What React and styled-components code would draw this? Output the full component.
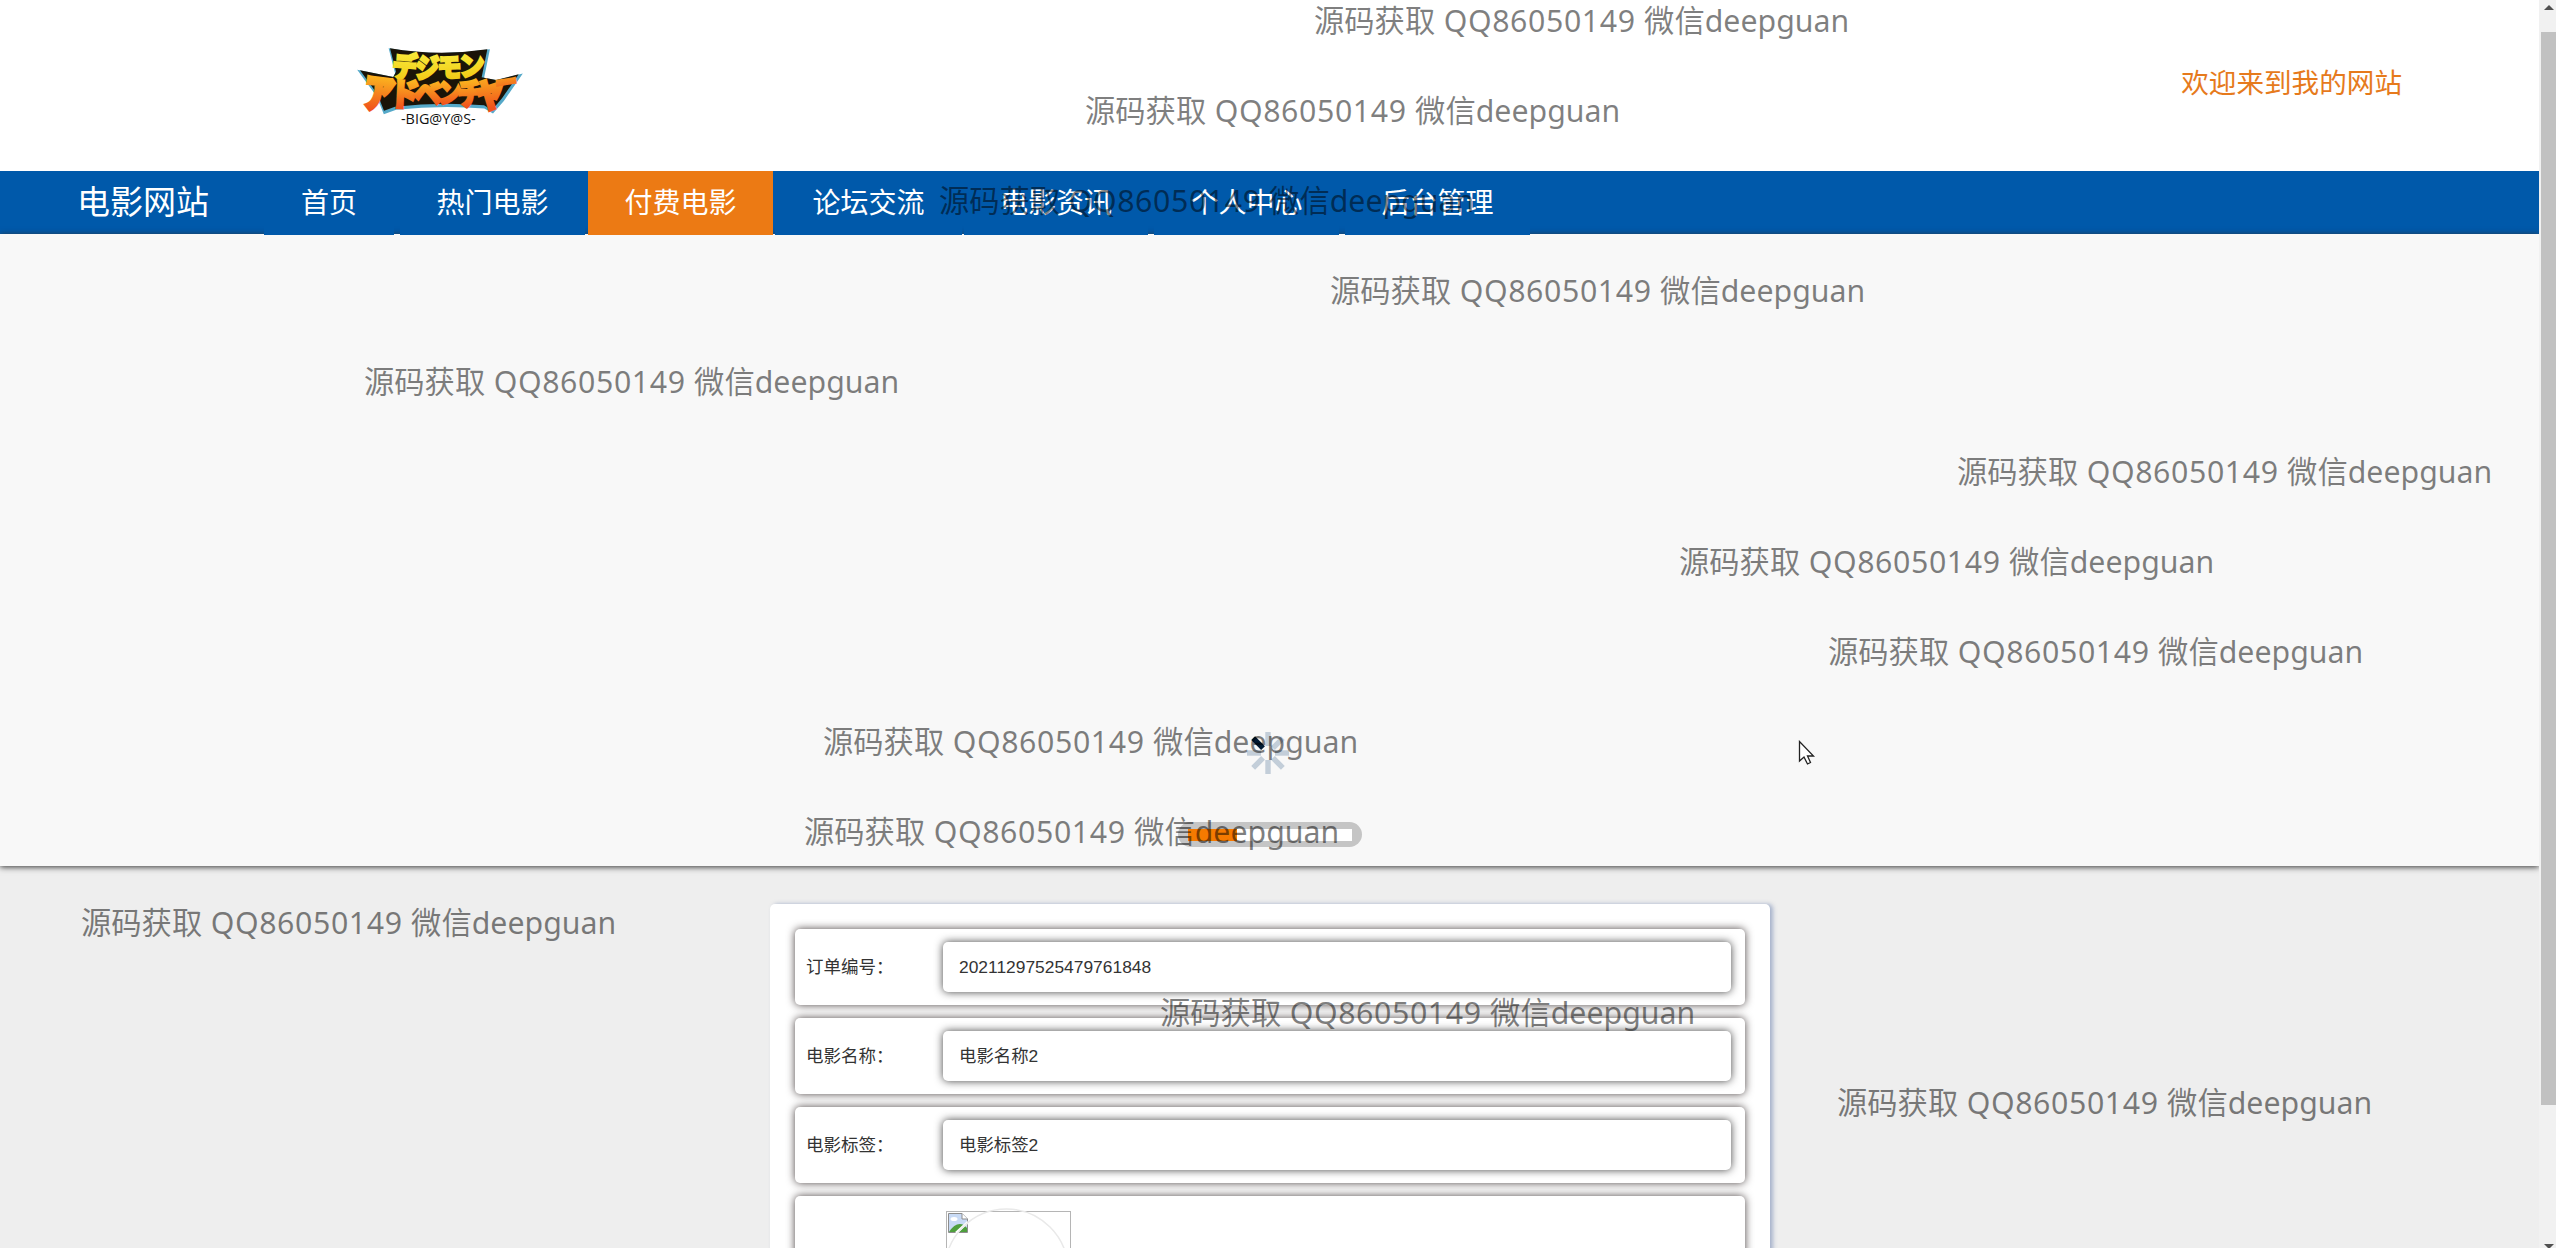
import React from "react";
import styled, { createGlobalStyle } from "styled-components";

const Global = createGlobalStyle`
  * { box-sizing: border-box; }
  html, body { margin: 0; height: 1248px; overflow: hidden; }
  body { background: #eee; font-family: "Liberation Sans", "Noto Sans CJK SC", sans-serif; color: #333; }
`;

const Screen = styled.div`
  position: relative;
  display: flex;
  width: 2556px;
  height: 1248px;
  overflow: hidden;
`;
const Page = styled.main`
  width: 2539px;
  height: 1248px;
  overflow: hidden;
  display: flex;
  flex-direction: column;
  background: #eee;
`;
const Header = styled.header`
  flex: none;
  height: 171px;
  background: #fff;
  display: flex;
  justify-content: space-between;
  align-items: flex-start;
  padding: 30px 137px 0 340px;
`;
const Welcome = styled.div`
  margin-top: 34px;
  font-size: 27.6px;
  line-height: 40px;
  color: #e67a1c;
  white-space: nowrap;
`;
const Nav = styled.nav`
  flex: none;
  height: 63px;
  background: #0059aa;
  display: flex;
  align-items: flex-start;
  padding-left: 77px;
  color: #fff;
  white-space: nowrap;
`;
const Brand = styled.div`
  width: 187px;
  font-size: 33px;
  line-height: 63px;
`;
const NavItem = styled.a`
  position: relative;
  z-index: 1;
  height: 64px;
  width: ${(p) => p.$width || 185}px;
  margin-right: ${(p) => p.$gap}px;
  background: ${(p) => (p.$active ? "#ec7a14" : "#0059aa")};
  font-size: 28px;
  line-height: 65px;
  text-align: center;
`;
const Hero = styled.section`
  position: relative;
  flex: none;
  height: 632px;
  background: #f8f8f8;
  box-shadow: 0 1px 6px #333;
  display: flex;
  flex-direction: column;
  align-items: center;
  justify-content: flex-end;
  gap: 47px;
  padding-bottom: 19px;
`;
const Progress = styled.div`
  width: 184px;
  height: 25px;
  margin-left: 1px;
  padding: 7px 10px 6px;
  border-radius: 13px;
  background: #c5c5c5;
  display: flex;
`;
const Track = styled.div`
  flex: 1;
  background: #fff;
`;
const Fill = styled.div`
  height: 100%;
  background: #f57a00;
`;
const Card = styled.section`
  flex: none;
  width: 1000px;
  height: 420px;
  margin: 38px 0 0 770px;
  padding: 25px;
  border-radius: 5px;
  background: #fff;
  box-shadow: 3px 0 4px rgba(95, 120, 170, 0.5);
  display: flex;
  flex-direction: column;
  gap: 13px;
`;
const Row = styled.div`
  flex: none;
  height: ${(p) => p.$height || 76}px;
  padding: 0 14px 0 11px;
  border-radius: 5px;
  background: #fff;
  box-shadow: 0 0 8px #4c4444;
  display: flex;
  align-items: ${(p) => (p.$height ? "flex-start" : "center")};
  font-size: 17.5px;
`;
const Label = styled.label`
  width: 137px;
  margin-top: -4px;
  white-space: nowrap;
`;
const Value = styled.div`
  width: 788px;
  height: 50px;
  padding: 0 16px;
  border-radius: 5px;
  background: #fff;
  box-shadow: 0 0 8px #444;
  line-height: 50px;
  font-size: 17.4px;
`;
const Scrollbar = styled.aside`
  width: 17px;
  height: 1248px;
  padding-left: 2px;
  background: #f1f1f1;
  display: flex;
  flex-direction: column;
  align-items: center;
  justify-content: space-between;
`;
const Thumb = styled.div`
  width: 15px;
  height: 1073px;
  margin: 22px 0 auto;
  background: #c1c1c1;
`;
const Arrow = styled.svg`
  flex: none;
  display: block;
  width: 10px;
  height: 5px;
  margin-top: ${(p) => (p.$up ? 5 : 0)}px;
  margin-bottom: ${(p) => (p.$up ? 0 : -1)}px;
`;
const Watermarks = styled.div`
  position: absolute;
  inset: 0;
  z-index: 5;
  pointer-events: none;
  color: rgba(0, 0, 0, 0.5);
  font-family: "Noto Sans", "Noto Sans CJK SC", sans-serif;
  font-size: 30.3px;
  line-height: 44px;
  white-space: pre;
`;
const Mark = styled.div`
  position: absolute;
  left: ${(p) => p.$x}px;
  top: ${(p) => p.$y}px;
  display: flex;
`;
const Latin = styled.span`
  letter-spacing: ${(p) => p.$spacing}px;
`;
const Cursor = styled.svg`
  position: absolute;
  left: 1798px;
  top: 740px;
  z-index: 6;
`;
const Picture = styled.svg`
  display: block;
  margin-left: 138px;
  margin-top: 9px;
`;
const Loader = styled.svg`
  display: block;
  margin-right: 3px;
`;

const logoTop = [
  ["デ", 163, 68, 68, 76, 4], ["ジ", 230, 74, 66, 72, 2],
  ["モ", 294, 75, 66, 70, -2], ["ン", 358, 72, 70, 70, -5],
];
const logoBottom = [
  ["ア", 80, 131, 86, 104, 7], ["ド", 156, 146, 80, 84, 3], ["ベ", 224, 150, 78, 74, 1],
  ["ン", 296, 150, 66, 72, 0], ["チ", 354, 149, 70, 82, -3], ["ャ", 400, 132, 88, 104, -5],
  ["ー", 462, 126, 62, 66, -9],
];

function LogoChar({ c, fill }) {
  const [ch, x, y, w, h, r] = c;
  return (
    <text
      transform={`translate(${x} ${y}) rotate(${r}) scale(${w / 92} ${h / 88})`}
      x="-4" y="84" fontSize="100" fontWeight="900"
      fontFamily="Noto Sans CJK JP, sans-serif"
      fill={fill} stroke={fill} strokeWidth="9"
    >{ch}</text>
  );
}

function Logo() {
  const shape = "M150 55Q295 80 442 58L425 142L468 150L536 133L486 205L456 240L432 226Q300 215 165 230L132 242L112 192L60 121L160 141L168 125Z";
  return (
    <svg width="200" height="110" viewBox="0 0 600 330">
      <defs>
        <linearGradient id="gold" gradientUnits="userSpaceOnUse" x1="0" y1="0" x2="0" y2="90">
          <stop offset="0" stopColor="#f8e838" /><stop offset="1" stopColor="#f2cc18" />
        </linearGradient>
        <linearGradient id="fire" gradientUnits="userSpaceOnUse" x1="0" y1="5" x2="0" y2="90">
          <stop offset="0" stopColor="#fbb21f" /><stop offset="1" stopColor="#f0521c" />
        </linearGradient>
      </defs>
      <path d={shape} fill="#55a9c9" stroke="#55a9c9" strokeWidth="9" transform="translate(2 5)" />
      <path d={shape} fill="#1a1408" />
      {logoTop.map((c) => <LogoChar key={c[0]} c={c} fill="url(#gold)" />)}
      {logoBottom.map((c) => <LogoChar key={c[0]} c={c} fill="url(#fire)" />)}
      <text x="183" y="281" fontFamily="Open Sans, sans-serif" fontSize="46" fill="#111" textLength="224" lengthAdjust="spacingAndGlyphs">-BIG@Y@S-</text>
    </svg>
  );
}

function Spinner() {
  return (
    <Loader width="44" height="44" viewBox="-22 -22 44 44">
      {[0, 45, 90, 135, 180, 225, 270, 315].map((a) => (
        <rect key={a} x="-2.7" y="-21" width="5.4" height="14" fill={a === 315 ? "#001a33" : "#c3ced9"} transform={`rotate(${a})`} />
      ))}
    </Loader>
  );
}

function BrokenPicture() {
  return (
    <Picture width="135" height="60" viewBox="0 0 135 60">
      <rect x="2.5" y="6.5" width="124" height="124" fill="none" stroke="#b5b5b5" />
      <path d="M4.5 8.5H18L23.500 14V27.500H4.500Z" fill="#c8daf5" stroke="#8d8d8d" />
      <path d="M18 8.500V14H23.500" fill="#fff" stroke="#8d8d8d" />
      <ellipse cx="10" cy="14" rx="3.500" ry="2" fill="#fff" />
      <path d="M5 27Q12 16 20 20L23 23V27Z" fill="#4e9f3d" />
      <path d="M12 28L24 17" stroke="#fff" strokeWidth="2.500" />
      <circle cx="62.500" cy="65.500" r="61.500" fill="none" stroke="#e9e9e9" strokeWidth="1.500" />
    </Picture>
  );
}

const items = [
  ["首页", 6, 130], ["热门电影", 3, 185], ["付费电影", 2, 185, true], ["论坛交流", 2, 187],
  ["电影资讯", 6, 184], ["个人中心", 6, 185], ["后台管理", 0, 185],
];
const rows = [
  ["订单编号：", "20211297525479761848"],
  ["电影名称：", "电影名称2"],
  ["电影标签：", "电影标签2"],
];
const marks = [1314, 1085, 939, 1330, 364, 1957, 1679, 1828, 823, 804, 81, 1160, 1837];

export default function App() {
  return (
    <>
      <Global />
      <Screen>
        <Page>
          <Header>
            <Logo />
            <Welcome>欢迎来到我的网站</Welcome>
          </Header>
          <Nav>
            <Brand>电影网站</Brand>
            {items.map(([name, gap, width, active]) => (
              <NavItem key={name} $gap={gap} $width={width} $active={active}>{name}</NavItem>
            ))}
          </Nav>
          <Hero>
            <Spinner />
            <Progress><Track><Fill style={{ width: "30%" }} /></Track></Progress>
          </Hero>
          <Card>
            {rows.map(([label, value]) => (
              <Row key={label}><Label>{label}</Label><Value>{value}</Value></Row>
            ))}
            <Row $height={220}><BrokenPicture /></Row>
          </Card>
        </Page>
        <Scrollbar>
          <Arrow $up viewBox="0 0 10 5"><path d="M0 5L5 0L10 5Z" fill="#505050" /></Arrow>
          <Thumb />
          <Arrow viewBox="0 0 10 5"><path d="M0 0H10L5 5Z" fill="#505050" /></Arrow>
        </Scrollbar>
        <Watermarks>
          {marks.map((x, i) => (
            <Mark key={x} $x={x} $y={-1 + i * 90.15}>
              源码获取<Latin $spacing={0.6}> QQ86050149 </Latin>微信<Latin $spacing={0}>deepguan</Latin>
            </Mark>
          ))}
        </Watermarks>
        <Cursor width="18" height="26" viewBox="0 0 18 26">
          <path d="M1.500 1.500V21L6 17L9.500 24L12.500 22.500L9.500 16H15.500Z" fill="#fff" stroke="#222" strokeWidth="1.300" />
        </Cursor>
      </Screen>
    </>
  );
}
